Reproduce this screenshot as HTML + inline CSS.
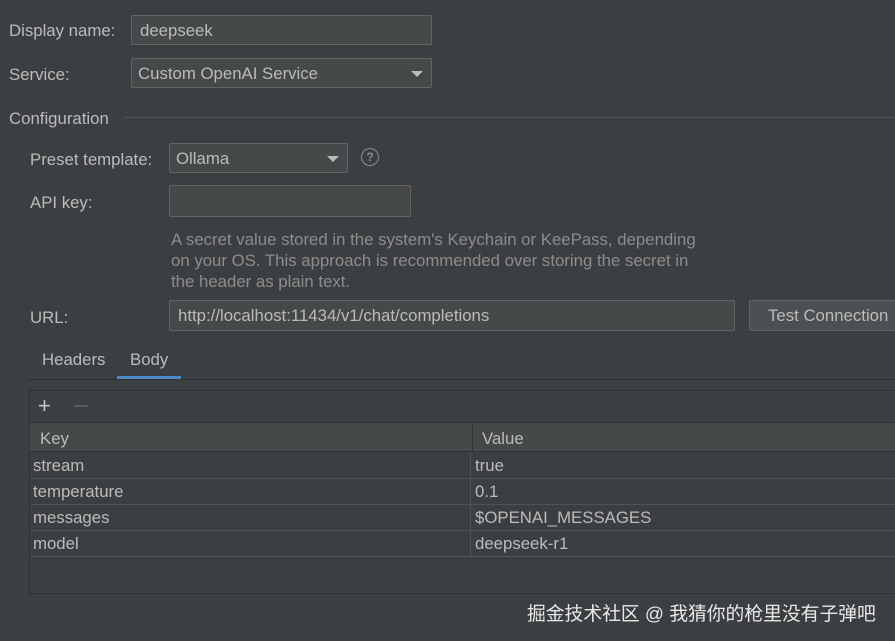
<html><head><style>
body{margin:0;width:895px;height:641px;background:#3c3f41;font-family:"Liberation Sans","Noto Sans CJK SC",sans-serif;font-size:16.8px;color:#bbbbbb;position:relative;overflow:hidden}
.a{position:absolute;white-space:nowrap}
.in{position:absolute;background:#45494a;border:1px solid #646464;border-radius:2px;box-sizing:border-box;color:#bbbbbb;padding-left:8px;line-height:30px}
.arr{position:absolute;width:0;height:0;border-left:6px solid transparent;border-right:6px solid transparent;border-top:6px solid #bbb}
.row{position:absolute;left:31px;width:864px;height:26px;border-bottom:1px solid #505355;line-height:28px}
.row span{position:absolute}
</style></head><body>
<div class="a" style="left:9px;top:21px">Display name:</div>
<div class="in" style="left:131px;top:15px;width:301px;height:30px">deepseek</div>
<div class="a" style="left:9px;top:65px">Service:</div>
<div class="in" style="left:131px;top:58px;width:301px;height:30px;padding-left:6px">Custom OpenAI Service</div>
<div class="arr" style="left:411px;top:71px"></div>
<div class="a" style="left:9px;top:109px">Configuration</div>
<div class="a" style="left:124px;top:117px;width:771px;height:1px;background:#515151"></div>
<div class="a" style="left:30px;top:150px">Preset template:</div>
<div class="in" style="left:169px;top:143px;width:179px;height:30px;padding-left:6px">Ollama</div>
<div class="arr" style="left:327px;top:156px"></div>
<div class="a" style="left:361px;top:148px;width:16px;height:16px;border:1.5px solid #8c8c8c;border-radius:50%;font-size:12px;line-height:16px;text-align:center;color:#8c8c8c;font-weight:bold">?</div>
<div class="a" style="left:30px;top:193px">API key:</div>
<div class="in" style="left:169px;top:185px;width:242px;height:32px"></div>
<div class="a" style="left:171px;top:229px;color:#8c8c8c;line-height:21px;white-space:nowrap">A secret value stored in the system's Keychain or KeePass, depending<br>on your OS. This approach is recommended over storing the secret in<br>the header as plain text.</div>
<div class="a" style="left:30px;top:308px">URL:</div>
<div class="in" style="left:169px;top:300px;width:566px;height:31px">http://localhost:11434/v1/chat/completions</div>
<div class="in" style="left:749px;top:300px;width:160px;height:31px;background:#4c5052;padding-left:18px">Test Connection</div>
<div class="a" style="left:42px;top:350px">Headers</div>
<div class="a" style="left:130px;top:350px">Body</div>
<div class="a" style="left:28px;top:379px;width:867px;height:1px;background:#323232"></div>
<div class="a" style="left:117px;top:376px;width:64px;height:3px;background:#4a88c7"></div>
<div class="a" style="left:29px;top:390px;width:866px;height:204px;border:1px solid #2f3133;border-right:none;background:#3c3f41;box-sizing:border-box"></div>
<div class="a" style="left:38px;top:393px;font-size:22px;color:#c8c8c8">+</div>
<div class="a" style="left:74px;top:405px;width:14px;height:2px;background:#5a5d5f"></div>
<div class="a" style="left:30px;top:422px;width:865px;height:30px;background:#45494a;border-top:1px solid #323232;border-bottom:1px solid #323232;box-sizing:border-box"></div>
<div class="a" style="left:472px;top:423px;width:1px;height:28px;background:#323232"></div>
<div class="a" style="left:40px;top:429px">Key</div>
<div class="a" style="left:482px;top:429px">Value</div>
<div class="row" style="top:452px"><span style="left:2px">stream</span><span style="left:444px">true</span></div>
<div class="row" style="top:478px"><span style="left:2px">temperature</span><span style="left:444px">0.1</span></div>
<div class="row" style="top:504px"><span style="left:2px">messages</span><span style="left:444px">$OPENAI_MESSAGES</span></div>
<div class="row" style="top:530px"><span style="left:2px">model</span><span style="left:444px">deepseek-r1</span></div>
<div class="a" style="left:470px;top:452px;width:1px;height:104px;background:#505355"></div>
<div class="a" style="left:527px;top:599px;font-size:18.8px;color:#e8e8e8">掘金技术社区 @ 我猜你的枪里没有子弹吧</div>
</body></html>
